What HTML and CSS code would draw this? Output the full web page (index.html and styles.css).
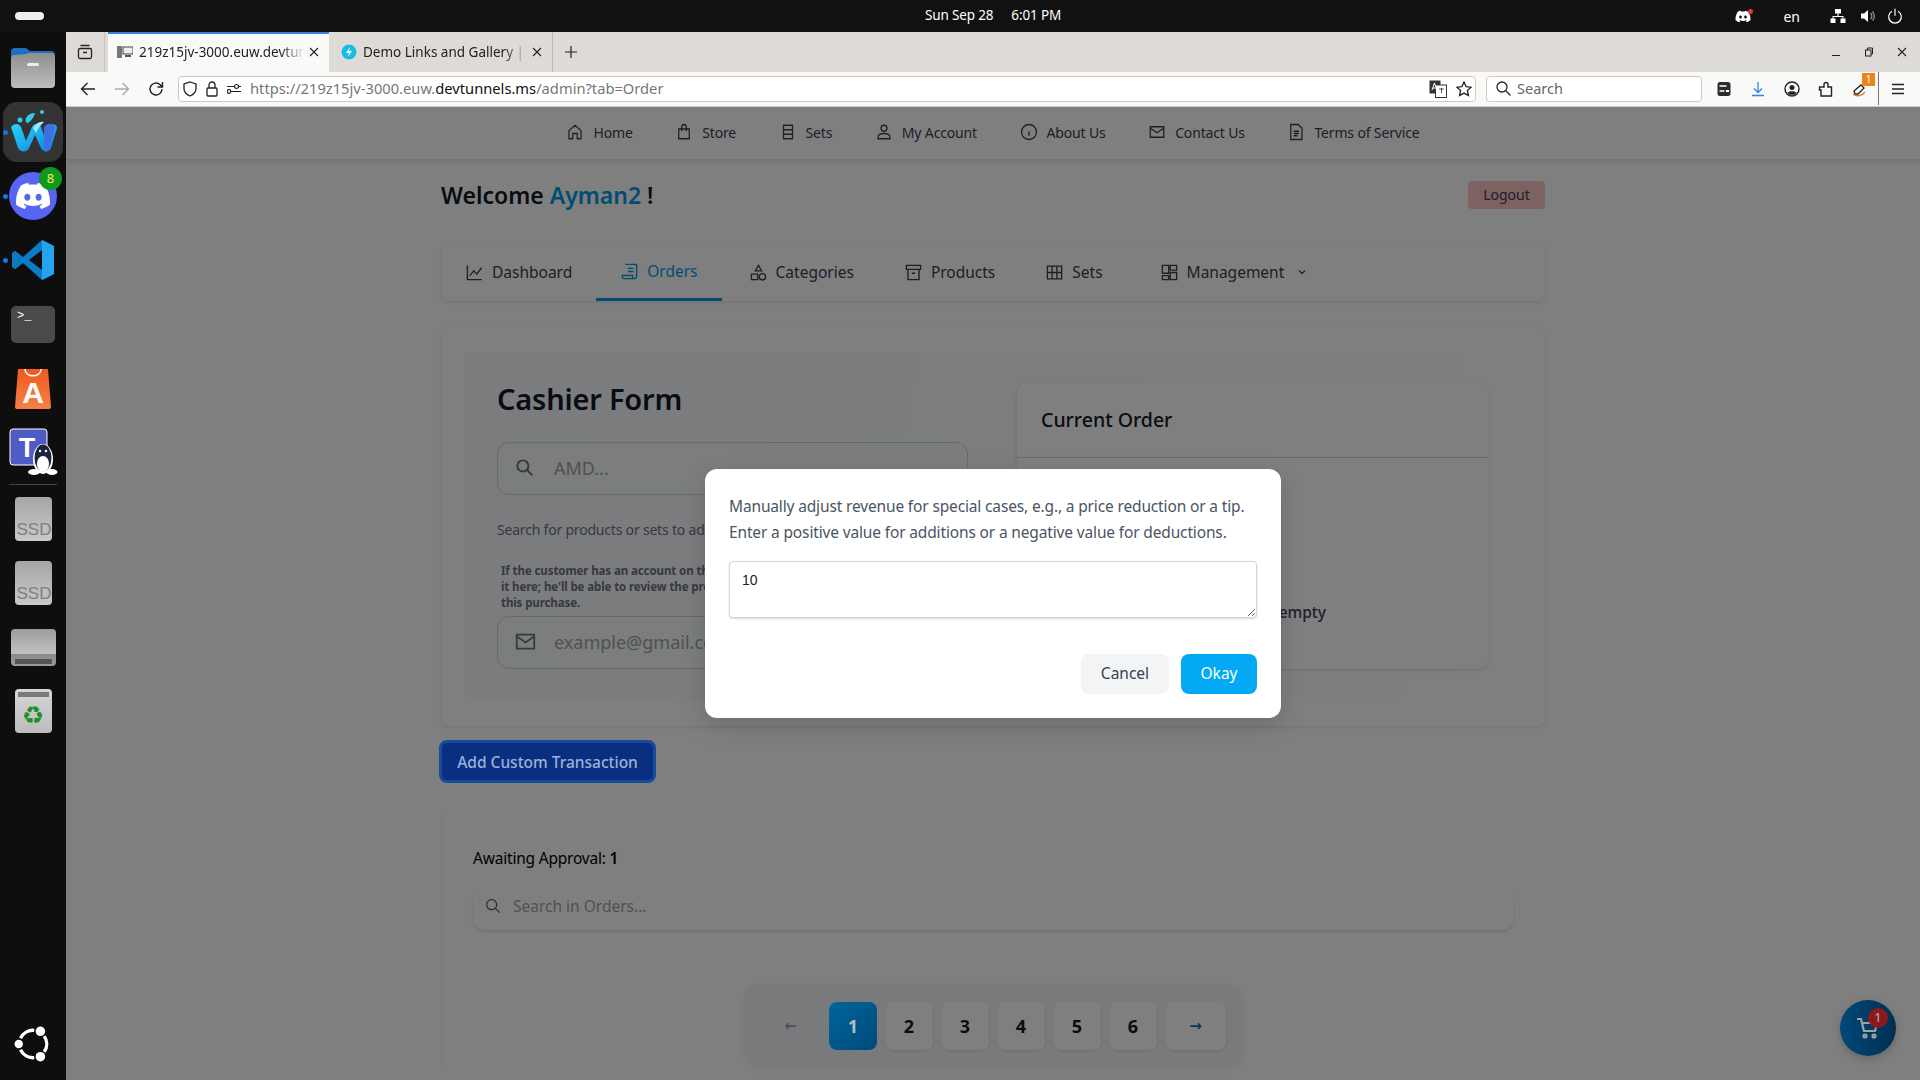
FILE: index.html
```html
<!doctype html>
<html lang="en">
	<head>
		<meta charset="utf-8">
		<title>Admin - Orders</title>
		<link rel="stylesheet" href="styles.css">
	</head>
	<body>
	<div class="topbar">
		<span class="pill"></span>
		<div class="clock"><span>Sun Sep 28</span><span>6:01 PM</span></div>
		<div class="tray">
			<span class="tray-discord">
				<svg width="20" height="15" viewBox="0 0 24 24" fill="#fff"><path d="M20.317 4.3698a19.7913 19.7913 0 00-4.8851-1.5152.0741.0741 0 00-.0785.0371c-.211.3753-.4447.8648-.6083 1.2495-1.8447-.2762-3.68-.2762-5.4868 0-.1636-.3933-.4058-.8742-.6177-1.2495a.077.077 0 00-.0785-.037 19.7363 19.7363 0 00-4.8852 1.515.0699.0699 0 00-.0321.0277C.5334 9.0458-.319 13.5799.0992 18.0578a.0824.0824 0 00.0312.0561c2.0528 1.5076 4.0413 2.4228 5.9929 3.0294a.0777.0777 0 00.0842-.0276c.4616-.6304.8731-1.2952 1.226-1.9942a.076.076 0 00-.0416-.1057c-.6528-.2476-1.2743-.5495-1.8722-.8923a.077.077 0 01-.0076-.1277c.1258-.0943.2517-.1923.3718-.2914a.0743.0743 0 01.0776-.0105c3.9278 1.7933 8.18 1.7933 12.0614 0a.0739.0739 0 01.0785.0095c.1202.099.246.1981.3728.2924a.077.077 0 01-.0066.1276 12.2986 12.2986 0 01-1.873.8914.0766.0766 0 00-.0407.1067c.3604.698.7719 1.3628 1.225 1.9932a.076.076 0 00.0842.0286c1.961-.6067 3.9495-1.5219 6.0023-3.0294a.077.077 0 00.0313-.0552c.5004-5.177-.8382-9.6739-3.5485-13.6604a.061.061 0 00-.0312-.0286zM8.02 15.3312c-1.1825 0-2.1569-1.0857-2.1569-2.419 0-1.3332.9555-2.4189 2.157-2.4189 1.2108 0 2.1757 1.0952 2.1568 2.419 0 1.3332-.9555 2.4189-2.1569 2.4189zm7.9748 0c-1.1825 0-2.1569-1.0857-2.1569-2.419 0-1.3332.9554-2.4189 2.1569-2.4189 1.2108 0 2.1757 1.0952 2.1568 2.419 0 1.3332-.946 2.4189-2.1568 2.4189Z"/></svg>
				<i class="tray-dot"></i>
			</span>
			<span class="tray-lang">en</span>
			<svg class="tray-net" width="16" height="16" viewBox="0 0 16 16" fill="#fff"><rect x="5" y="1" width="6" height="4.5"/><rect x="0.5" y="10.5" width="5" height="4.5"/><rect x="10.5" y="10.5" width="5" height="4.5"/><path d="M7.5 5h1v3h5v3h-1V9H3.5v2h-1V8h5z"/></svg>
			<svg class="tray-vol" width="16" height="16" viewBox="0 0 16 16" fill="#fff"><path d="M1 5.5h3L8 2v12l-4-3.500H1z"/><path d="M10.500 5a4 4 0 0 1 0 6M12.500 3.500a6.500 6.500 0 0 1 0 9" fill="none" stroke="#999" stroke-width="1.200"/></svg>
			<svg class="tray-power" width="16" height="16" viewBox="0 0 16 16" fill="none" stroke="#fff" stroke-width="1.200"><path d="M5 3.200a6.300 6.300 0 1 0 6 0M8 .8v7"/></svg>
		</div>
	</div>

	<div class="desktop">
		<div class="dock">
			<div class="dock-item">
				<svg width="46" height="42" viewBox="0 0 46 42"><path d="M1 5a4 4 0 0 1 4-4h11l4 3h21a4 4 0 0 1 4 4v12H1z" fill="#1c6fc4"/><path d="M1 12a4 4 0 0 1 4-4l11-1 3-1h22a4 4 0 0 1 4 4v27a4 4 0 0 1-4 4H5a4 4 0 0 1-4-4z" fill="url(#folder)"/><rect x="17" y="16" width="12" height="3" rx="1.500" fill="#eee"/><defs><linearGradient id="folder" x1="0" y1="0" x2="0" y2="1"><stop offset="0" stop-color="#8f8f8f"/><stop offset="1" stop-color="#bdbdbd"/></linearGradient></defs></svg>
			</div>
			<div class="dock-item dock-active">
				<i class="dock-dot"></i>
				<svg width="50" height="44" viewBox="0 0 50 44"><defs><linearGradient id="wave" x1="0" y1="0" x2="1" y2="1"><stop offset="0" stop-color="#2bd4f7"/><stop offset="1" stop-color="#0a7fe8"/></linearGradient></defs><path d="M3 17c3-4 8-4 10 0l5 14 6-14c2-4 7-4 9 0l5 14 5-15c1-3 6-2 6 2l-6 20c-1 4-8 5-10 0l-6-13-6 13c-2 5-9 4-11 0z" fill="url(#wave)"/><path d="M36 18c1-5 10-6 11 0l-6 20c-1 3-3 4-5 3z" fill="#3d6fe0"/><path d="M25 18c3-5 7-7 11-6-3 3-6 6-8 11z" fill="#9be9fb"/><path d="M18 8c2-4 6-5 9-5-1 4-3 7-7 10-2 0-3-2-2-5z" fill="#33c8ec"/><circle cx="12" cy="10" r="2.500" fill="#33c8ec"/><circle cx="34" cy="2" r="2" fill="#33c8ec"/></svg>
			</div>
			<div class="dock-item">
				<i class="dock-dot"></i>
				<span class="discord-tile">
					<svg width="34" height="34" viewBox="0 0 24 24" fill="#fff"><path d="M20.317 4.3698a19.7913 19.7913 0 00-4.8851-1.5152.0741.0741 0 00-.0785.0371c-.211.3753-.4447.8648-.6083 1.2495-1.8447-.2762-3.68-.2762-5.4868 0-.1636-.3933-.4058-.8742-.6177-1.2495a.077.077 0 00-.0785-.037 19.7363 19.7363 0 00-4.8852 1.515.0699.0699 0 00-.0321.0277C.5334 9.0458-.319 13.5799.0992 18.0578a.0824.0824 0 00.0312.0561c2.0528 1.5076 4.0413 2.4228 5.9929 3.0294a.0777.0777 0 00.0842-.0276c.4616-.6304.8731-1.2952 1.226-1.9942a.076.076 0 00-.0416-.1057c-.6528-.2476-1.2743-.5495-1.8722-.8923a.077.077 0 01-.0076-.1277c.1258-.0943.2517-.1923.3718-.2914a.0743.0743 0 01.0776-.0105c3.9278 1.7933 8.18 1.7933 12.0614 0a.0739.0739 0 01.0785.0095c.1202.099.246.1981.3728.2924a.077.077 0 01-.0066.1276 12.2986 12.2986 0 01-1.873.8914.0766.0766 0 00-.0407.1067c.3604.698.7719 1.3628 1.225 1.9932a.076.076 0 00.0842.0286c1.961-.6067 3.9495-1.5219 6.0023-3.0294a.077.077 0 00.0313-.0552c.5004-5.177-.8382-9.6739-3.5485-13.6604a.061.061 0 00-.0312-.0286zM8.02 15.3312c-1.1825 0-2.1569-1.0857-2.1569-2.419 0-1.3332.9555-2.4189 2.157-2.4189 1.2108 0 2.1757 1.0952 2.1568 2.419 0 1.3332-.9555 2.4189-2.1569 2.4189zm7.9748 0c-1.1825 0-2.1569-1.0857-2.1569-2.419 0-1.3332.9554-2.4189 2.1569-2.4189 1.2108 0 2.1757 1.0952 2.1568 2.419 0 1.3332-.946 2.4189-2.1568 2.4189Z"/></svg>
					<b class="discord-badge">8</b>
				</span>
			</div>
			<div class="dock-item">
				<i class="dock-dot"></i>
				<svg width="44" height="42" viewBox="0 0 44 42"><path d="M31 1l12 6v28l-12 6-19-17-8 6-3-2v-14l3-2 8 6z" fill="#0a7bc4"/><path d="M31 1l12 6v28l-12 6z" fill="#24a3ee"/><path d="M31 11L18 21l13 10z" fill="#0e0e0e"/><path d="M1 14l3-2 8 6 -4 3 4 3-8 6-3-2 6-7z" fill="#0e77ba"/></svg>
			</div>
			<div class="dock-item">
				<span class="term-tile">&gt;_</span>
			</div>
			<div class="dock-item">
				<svg width="38" height="44" viewBox="0 0 38 44"><defs><linearGradient id="bag" x1="0" y1="0" x2="0" y2="1"><stop offset="0" stop-color="#ee5a1e"/><stop offset="1" stop-color="#f58146"/></linearGradient></defs><path d="M4 3h30l3 38a2 2 0 0 1-2 2H3a2 2 0 0 1-2-2z" fill="url(#bag)"/><path d="M11 3c0 9 16 9 16 0" fill="none" stroke="#fff" stroke-width="1.500"/><text x="19" y="37" text-anchor="middle" font-family="Liberation Sans" font-size="30" font-weight="700" fill="#fff">A</text></svg>
			</div>
			<div class="dock-item">
				<svg width="50" height="48" viewBox="0 0 50 48"><rect x="2" y="1" width="37" height="36" rx="3" fill="#4e5cc4" stroke="#fff"/><text x="19" y="29" text-anchor="middle" font-family="Liberation Sans" font-size="27" font-weight="700" fill="#fff">T</text><ellipse cx="35" cy="31" rx="10" ry="15" fill="#fff"/><ellipse cx="35" cy="30" rx="8.500" ry="13.500" fill="#1b2340"/><ellipse cx="35" cy="36" rx="6" ry="8" fill="#fff"/><ellipse cx="26" cy="44" rx="6" ry="3" fill="#fff"/><ellipse cx="44" cy="44" rx="5.500" ry="3" fill="#fff"/><circle cx="32" cy="23" r="1.200" fill="#fff"/><circle cx="38" cy="23" r="1.200" fill="#fff"/></svg>
			</div>
			<div class="dock-sep"></div>
			<div class="dock-item">
				<span class="drive-tile">SSD</span>
			</div>
			<div class="dock-item">
				<span class="drive-tile">SSD</span>
			</div>
			<div class="dock-item">
				<span class="disk-tile"></span>
			</div>
			<div class="dock-item">
				<span class="trash-tile">♻</span>
			</div>
			<div class="dock-item dock-last">
				<svg width="38" height="38" viewBox="0 0 36 36" fill="none" stroke="#fff" stroke-width="3.200"><path d="M6.220 12.510A13 13 0 0 1 19.130 5.050M28.650 10.540A13 13 0 0 1 28.650 25.460M19.130 30.950A13 13 0 0 1 6.220 23.490"/><circle cx="4.500" cy="18" r="4" fill="#fff" stroke="none"/><circle cx="25" cy="6" r="4.500" fill="#fff" stroke="none"/><circle cx="25" cy="30" r="4.500" fill="#fff" stroke="none"/></svg>
			</div>
		</div>

		<div class="browser">
			<div class="tabstrip">
				<div class="tab-list">
					<svg width="16" height="16" viewBox="0 0 16 16" fill="none" stroke="#222" stroke-width="1.300"><rect x="1.500" y="4.500" width="13" height="10" rx="1.500"/><path d="M3.500 1.500h9M6 8.500h4"/></svg>
				</div>
				<div class="tab tab-on">
					<svg width="16" height="16" viewBox="0 0 16 16" fill="#555"><path d="M0 2h5v12H0z" fill="#777"/><rect x="6" y="3" width="10" height="7" fill="#eee" stroke="#444"/><path d="M8 11h6v2H8z"/></svg>
					<span class="tab-title">219z15jv-3000.euw.devtunnels.ms/admin?tab=Order</span>
					<svg class="tab-x" width="10" height="10" viewBox="0 0 10 10" stroke="#222" stroke-width="1.100"><path d="M1 1l8 8M9 1l-8 8"/></svg>
				</div>
				<div class="tab tab-two">
					<svg width="16" height="16" viewBox="0 0 16 16"><circle cx="8" cy="8" r="7.500" fill="#16bce2"/><path d="M9 3L5 9h3l-1 4 4-6H8z" fill="#fff"/></svg>
					<span class="tab-title">Demo Links and Gallery | Shadcn</span>
					<svg class="tab-x" width="10" height="10" viewBox="0 0 10 10" stroke="#222" stroke-width="1.100"><path d="M1 1l8 8M9 1l-8 8"/></svg>
				</div>
				<div class="tab-new">
					<svg width="12" height="12" viewBox="0 0 12 12" stroke="#222" stroke-width="1.200"><path d="M6 0v12M0 6h12"/></svg>
				</div>
				<div class="win-btns">
					<svg width="10" height="10" viewBox="0 0 10 10" stroke="#222"><path d="M1 8.500h8"/></svg>
					<svg width="10" height="10" viewBox="0 0 10 10" fill="none" stroke="#222"><rect x="1.500" y="3" width="5.500" height="6"/><path d="M3.500 3V1h5v6H7"/></svg>
					<svg width="10" height="10" viewBox="0 0 10 10" stroke="#222" stroke-width="1.100"><path d="M1 1l8 8M9 1l-8 8"/></svg>
				</div>
			</div>

			<div class="toolbar">
				<svg class="tool-back" width="16" height="16" viewBox="0 0 16 16" fill="none" stroke="#222" stroke-width="1.400"><path d="M15 8H1.500M7.500 2L1.500 8l6 6"/></svg>
				<svg class="tool-fwd" width="16" height="16" viewBox="0 0 16 16" fill="none" stroke="#aaa" stroke-width="1.400"><path d="M1 8h13.500M8.500 2l6 6-6 6"/></svg>
				<svg class="tool-reload" width="16" height="16" viewBox="0 0 16 16" fill="none" stroke="#222" stroke-width="1.400"><path d="M14 8a6 6 0 1 1-2-4.500L14 5.500M14.500 1v5h-5"/></svg>
				<div class="urlbar">
					<svg width="14" height="16" viewBox="0 0 14 16" fill="none" stroke="#222" stroke-width="1.300"><path d="M7 1l6 2v5c0 3-3 6-6 7-3-1-6-4-6-7V3z"/></svg>
					<svg width="12" height="16" viewBox="0 0 12 16" fill="none" stroke="#222" stroke-width="1.300"><rect x="1" y="7" width="10" height="8" rx="1"/><path d="M3 7V4a3 3 0 0 1 6 0v3"/></svg>
					<svg width="14" height="12" viewBox="0 0 14 12" fill="none" stroke="#222" stroke-width="1.200"><path d="M0 3.500h7M12 3.500h2M4 8.500h10"/><circle cx="9.500" cy="3.500" r="2"/><circle cx="2" cy="8.500" r="1.800"/></svg>
					<div class="url-text"><span>https://219z15jv-3000.euw.</span><b>devtunnels.ms</b><span>/admin?tab=Order</span></div>
					<svg width="18" height="18" viewBox="0 0 18 18"><rect x="0.500" y="0.500" width="11" height="13" fill="#333"/><rect x="6.500" y="5" width="11" height="12.500" fill="#fff" stroke="#333"/><path d="M3 10l2.500-7L8 10M4 8h3" stroke="#fff" fill="none"/><path d="M10 9h5M12.500 8v5" stroke="#555"/></svg>
					<svg width="16" height="16" viewBox="0 0 16 16" fill="none" stroke="#222" stroke-width="1.300"><path d="M8 1l2.100 4.600 5 .6-3.700 3.400 1 5L8 12.100l-4.400 2.500 1-5L.9 6.200l5-.6z"/></svg>
				</div>
				<div class="searchbar">
					<svg width="15" height="15" viewBox="0 0 15 15" fill="none" stroke="#222" stroke-width="1.300"><circle cx="6" cy="6" r="5"/><path d="M9.500 9.500L14.500 14.500"/></svg>
					<span>Search</span>
				</div>
				<div class="tool-icons">
					<svg width="16" height="16" viewBox="0 0 16 16"><rect x="1.500" y="1" width="13" height="14" rx="2.500" fill="#2c2c2c"/><path d="M3.500 5h7M3.500 10h5" stroke="#fff" stroke-width="1.500"/><rect x="10" y="9" width="3" height="2" fill="#fff"/></svg>
					<svg width="16" height="16" viewBox="0 0 16 16" fill="none" stroke="#3584e4" stroke-width="1.300"><path d="M8 1v10M4 7.500L8 11.500l4-4M2 14.500h12"/></svg>
					<svg width="16" height="16" viewBox="0 0 16 16"><circle cx="8" cy="8" r="7" fill="none" stroke="#222" stroke-width="1.400"/><circle cx="8" cy="6.500" r="2.500" fill="#222"/><path d="M3.500 12c1-2.500 8-2.500 9 0l-2 1.800H5.500z" fill="#222"/></svg>
					<svg width="16" height="16" viewBox="0 0 16 16" fill="none" stroke="#222" stroke-width="1.400"><path d="M3 15V9H1.500V6H6V3.500a2 2 0 0 1 4 0V6h3.500v9z"/></svg>
					<span class="ext-pen">
						<svg width="16" height="16" viewBox="0 0 16 16" fill="none" stroke="#222" stroke-width="1.300"><path d="M2 10l7-6 3 3-6 6H3z" fill="#fff"/><path d="M1 13c4 3 9 2 12-2" stroke="#d9772a"/></svg>
						<b class="ext-badge">1</b>
					</span>
					<i class="tool-sep"></i>
					<svg class="tool-menu" width="14" height="12" viewBox="0 0 14 12" stroke="#222" stroke-width="1.300"><path d="M1 1.500h12M1 6h12M1 10.500h12"/></svg>
				</div>
			</div>

			<div class="page">
				<div class="nav">
					<a class="nav-item">
						<svg viewBox="0 0 24 24"><path d="M4 21V10l8-7 8 7v11h-5v-7H9v7z"/></svg>Home</a>
					<a class="nav-item">
						<svg viewBox="0 0 24 24"><path d="M5 8h14v13H5zM9 11V5a3 3 0 0 1 6 0v6"/></svg>Store</a>
					<a class="nav-item">
						<svg viewBox="0 0 24 24"><path d="M6 3h12v18H6zM6 9h12M6 15h12M12 18h.01"/></svg>Sets</a>
					<a class="nav-item">
						<svg viewBox="0 0 24 24"><circle cx="12" cy="7" r="4"/><path d="M4 21v-2c0-3 3-5 8-5s8 2 8 5v2z"/></svg>My Account</a>
					<a class="nav-item">
						<svg viewBox="0 0 24 24"><circle cx="12" cy="12" r="10"/><path d="M12 11v6M12 7h.01"/></svg>About Us</a>
					<a class="nav-item">
						<svg viewBox="0 0 24 24"><path d="M3 5h18v14H3zM3 7l9 6 9-6"/></svg>Contact Us</a>
					<a class="nav-item">
						<svg viewBox="0 0 24 24"><path d="M5 2h10l5 5v15H5zM9 11h7M9 14h7M9 17h5"/></svg>Terms of Service</a>
				</div>

				<div class="container">
					<div class="welcome-row">
						<h2 class="welcome">Welcome <span class="name">Ayman2</span> !</h2>
						<button class="logout">Logout</button>
					</div>

					<div class="tabs">
						<a class="tab-link">
							<svg viewBox="0 0 24 24"><path d="M3 3v18h18M6 16l5-6 4 4 6-8"/></svg>Dashboard</a>
						<a class="tab-link tab-link-on">
							<svg viewBox="0 0 24 24"><path d="M7 3h14v15a3 3 0 0 1-3 3H5a2 2 0 0 1-2-2v-2h13v2a2 2 0 0 0 2 2M10 8h7M10 12h7"/></svg>Orders</a>
						<a class="tab-link tab-link-wide">
							<svg viewBox="0 0 24 24"><path d="M12 3l4 7H8zM3 14h8v7H3z"/><circle cx="17" cy="17.500" r="4"/></svg>Categories</a>
						<a class="tab-link tab-link-wide">
							<svg viewBox="0 0 24 24"><path d="M3 3h18v5H3zM5 8v13h14V8M10 13h4"/></svg>Products</a>
						<a class="tab-link tab-link-wide">
							<svg viewBox="0 0 24 24"><path d="M3 4h18v16H3zM3 12h18M9 4v16M15 4v16"/></svg>Sets</a>
						<a class="tab-link tab-link-wide tab-link-more">
							<svg viewBox="0 0 24 24"><path d="M3 3h8v10H3zM13 3h8v6h-8zM13 12h8v9h-8zM3 16h8v5H3z"/></svg>Management
							<svg class="chevron" viewBox="0 0 24 24"><path d="M6 9l6 6 6-6"/></svg></a>
					</div>

					<div class="card">
						<div class="panel">
							<div class="cashier">
								<h1 class="cashier-title">Cashier Form</h1>
								<div class="field">
									<svg viewBox="0 0 24 24" class="field-icon"><circle cx="10" cy="10" r="7"/><path d="M15 15l7 7"/></svg>
									<span class="field-hint">AMD...</span>
								</div>
								<p class="helper">Search for products or sets to add to the order</p>
								<p class="note">If the customer has an account on the store, enter<br>it here; he'll be able to review the products of<br>this purchase.</p>
								<div class="field field-mail">
									<svg viewBox="0 0 24 24" class="field-icon field-icon-mail"><path d="M2 4h20v16H2zM2 6l10 7 10-7"/></svg>
									<span class="field-hint">example@gmail.com</span>
								</div>
							</div>
							<div class="order">
								<div class="order-head">Current Order</div>
								<div class="order-body">
									<svg class="order-cart" viewBox="0 0 24 24"><path d="M1 2h4l3 13h11l3-9H6"/></svg>
									<span>Your order is empty</span>
								</div>
							</div>
						</div>
					</div>

					<button class="custom-btn">Add Custom Transaction</button>

					<div class="orders">
						<div class="awaiting">Awaiting Approval: <b>1</b></div>
						<div class="orders-search">
							<svg viewBox="0 0 24 24"><circle cx="10" cy="10" r="7.500"/><path d="M15.500 15.500L22 22"/></svg>
							<span>Search in Orders...</span>
						</div>
						<div class="pager">
							<a class="pg pg-arrow pg-off">←</a>
							<a class="pg pg-on">1</a>
							<a class="pg">2</a>
							<a class="pg">3</a>
							<a class="pg">4</a>
							<a class="pg">5</a>
							<a class="pg">6</a>
							<a class="pg pg-arrow pg-next">→</a>
						</div>
					</div>
				</div>

				<div class="fab">
					<svg viewBox="0 0 24 24"><path d="M1 3h4l3 12h11l2-8H6"/><circle cx="9" cy="20" r="1.500"/><circle cx="18" cy="20" r="1.500"/></svg>
					<b class="fab-badge">1</b>
				</div>

				<div class="overlay">
					<div class="modal">
						<p class="modal-text">Manually adjust revenue for special cases, e.g., a price reduction or a tip.<br>Enter a positive value for additions or a negative value for deductions.</p>
						<textarea class="modal-input">10</textarea>
						<div class="modal-btns">
							<button class="btn-cancel">Cancel</button>
							<button class="btn-okay">Okay</button>
						</div>
					</div>
				</div>
			</div>
		</div>
	</div>
	</body>
</html>
```

FILE: styles.css
```css
*{margin: 0;padding: 0;box-sizing: border-box;}
html,body{height: 100%;overflow: hidden;}
body{
	display: flex;
	flex-direction: column;
	font-family: "Noto Sans", "Open Sans", sans-serif;
	background: #111;
	color: #111827;
}
button{font-family: inherit;border: 0;}
svg{flex: none;display: block;}

/* ubuntu top bar */
.topbar{
	position: relative;
	flex: none;
	height: 32px;
	display: flex;
	align-items: center;
	justify-content: center;
	padding: 0 0 2px 66px;
	background: #111;
	color: #fff;
	font-size: 13.500px;
}
.pill{
	position: absolute;
	left: 15px;
	top: 12px;
	width: 29px;
	height: 8px;
	border-radius: 4px;
	background: #eee;
}
.clock{display: flex;gap: 18px;letter-spacing: -0.15px;}
.tray{
	position: absolute;
	right: 17px;
	top: 0;
	height: 32px;
	display: flex;
	align-items: center;
}
.tray-discord{position: relative;margin-right: 30px;}
.tray-dot{
	position: absolute;
	right: 0;
	top: 0;
	width: 5px;
	height: 5px;
	border-radius: 50%;
	background: #e33;
}
.tray-lang{font-size: 14px;margin-right: 30px;}
.tray-net{margin-right: 14px;}
.tray-vol{margin-right: 11px;}

/* dock */
.desktop{flex: 1;display: flex;min-height: 0;}
.dock{
	flex: none;
	width: 66px;
	display: flex;
	flex-direction: column;
	padding: 4px 0;
	background: #0e0e0e;
}
.dock-item{
	position: relative;
	flex: none;
	height: 64px;
	display: flex;
	align-items: center;
	justify-content: center;
}
.dock-active::before{
	content: "";
	position: absolute;
	left: 3px;
	top: 2px;
	width: 60px;
	height: 60px;
	border-radius: 14px;
	background: #333;
}
.dock-active svg{position: relative;}
.dock-last{margin-top: auto;}
.dock-dot{
	position: absolute;
	left: 3px;
	top: 30px;
	width: 5px;
	height: 5px;
	border-radius: 50%;
	background: #1473e6;
	z-index: 1;
}
.dock-sep{
	flex: none;
	height: 1px;
	margin: 0 9px 2px;
	background: #444;
}
.discord-tile{
	position: relative;
	width: 48px;
	height: 48px;
	border-radius: 50%;
	display: flex;
	align-items: center;
	justify-content: center;
	background: #5865f2;
}
.discord-badge{
	position: absolute;
	right: -5px;
	top: -5px;
	width: 23px;
	height: 23px;
	border-radius: 50%;
	background: #109a1c;
	color: #f4e96a;
	font-size: 13px;
	font-weight: 400;
	line-height: 23px;
	text-align: center;
}
.term-tile{
	width: 44px;
	height: 37px;
	padding: 2px 6px;
	border-radius: 5px;
	background: #4a4a4a;
	color: #fff;
	font-family: "Liberation Mono", monospace;
	font-size: 12px;
	line-height: 16px;
}
.drive-tile{
	width: 37px;
	height: 44px;
	border-radius: 4px;
	background: linear-gradient(#a5a5a5, #c9c9c9);
	color: #808080;
	font-family: "Liberation Sans", sans-serif;
	font-size: 17px;
	line-height: 65px;
	text-align: right;
	overflow: hidden;
}
.disk-tile{
	display: flex;
	align-items: flex-end;
	width: 45px;
	height: 37px;
	padding: 0 4px 2px;
	border-radius: 4px;
	background: linear-gradient(#9c9c9c, #c2c2c2 68%, #8a8a8a 68%, #9a9a9a);
}
.disk-tile::after{
	content: "";
	flex: 1;
	height: 5px;
	background: #555;
}
.trash-tile{
	position: relative;
	width: 37px;
	height: 44px;
	padding-top: 13px;
	border-radius: 4px;
	background: linear-gradient(#d6d6d6, #bcbcbc);
	color: #1f8f2c;
	font-family: "DejaVu Sans", sans-serif;
	font-size: 25px;
	line-height: 28px;
	text-align: center;
}
.trash-tile::before{
	content: "";
	position: absolute;
	left: 3px;
	right: 3px;
	top: 3px;
	height: 5px;
	background: #7b7b7b;
}

/* browser chrome */
.browser{flex: 1;min-width: 0;display: flex;flex-direction: column;}
.tabstrip{
	flex: none;
	height: 40px;
	display: flex;
	align-items: stretch;
	background: #dedbd6;
	color: #222;
	font-size: 13.500px;
}
.tab-list{
	width: 39px;
	display: flex;
	align-items: center;
	justify-content: center;
	border-right: 1px solid #c8c4be;
	margin-right: 3px;
}
.tab{
	width: 224px;
	display: flex;
	align-items: center;
	padding: 0 10px 0 9px;
	border-right: 1px solid #bdb9b3;
}
.tab-two{padding-left: 12px;}
.tab-on{
	width: 221px;
	background: #f9f9f7;
	border-top: 2px solid #3584e4;
	border-right: 0;
	padding-bottom: 2px;
}
.tab-title{
	flex: 1;
	min-width: 0;
	margin: 0 4px 0 6px;
	white-space: nowrap;
	overflow: hidden;
	-webkit-mask-image: linear-gradient(90deg, #000 85%, transparent);
	mask-image: linear-gradient(90deg, #000 85%, transparent);
}
.tab-new{
	width: 36px;
	display: flex;
	align-items: center;
	justify-content: center;
}
.win-btns{
	margin-left: auto;
	padding-right: 13px;
	display: flex;
	align-items: center;
	gap: 23px;
}
.toolbar{
	flex: none;
	height: 35px;
	display: flex;
	align-items: center;
	padding: 0 0 1px 14px;
	background: #f9f9f8;
	border-bottom: 1px solid #ccc9c4;
	color: #222;
}
.tool-fwd{margin-left: 18px;}
.tool-reload{margin-left: 18px;margin-right: 14px;}
.urlbar{
	width: 1298px;
	height: 26px;
	display: flex;
	align-items: center;
	gap: 9px;
	padding: 0 3px 0 4px;
	background: #fff;
	border: 1px solid #cfc9c2;
	border-radius: 4px;
	font-size: 14.700px;
}
.url-text{flex: 1;min-width: 0;padding-bottom: 2px;color: #777;white-space: nowrap;}
.url-text b{font-weight: 400;color: #111;}
.searchbar{
	width: 216px;
	height: 26px;
	margin-left: 10px;
	display: flex;
	align-items: center;
	gap: 6px;
	padding-left: 9px;
	background: #fff;
	border: 1px solid #cfc9c2;
	border-radius: 4px;
	font-size: 14.500px;
	color: #666;
}
.searchbar span{padding-bottom: 2px;}
.tool-icons{
	display: flex;
	align-items: center;
	gap: 18px;
	margin-left: 14px;
}
.ext-pen{position: relative;}
.ext-badge{
	position: absolute;
	right: -7px;
	top: -8px;
	width: 13px;
	height: 13px;
	background: #e9851d;
	color: #fff;
	font-size: 10px;
	font-weight: 400;
	line-height: 13px;
	text-align: center;
}
.tool-sep{flex: none;width: 1px;height: 33px;margin: 0 -6px 0 -8px;background: #777;}

/* page under the modal */
.page{position: relative;flex: 1;min-height: 0;overflow: hidden;background: #fff;}
.nav{
	height: 52px;
	display: flex;
	align-items: center;
	justify-content: center;
	gap: 42.500px;
	padding-bottom: 2px;
	background: #fff;
	box-shadow: 0 2px 6px rgba(0,0,0,.15);
	font-size: 14px;
	color: #374151;
}
.nav-item{display: flex;align-items: center;gap: 9px;letter-spacing: -0.15px;}
.nav-item svg{
	width: 18px;
	height: 18px;
	fill: none;
	stroke: currentColor;
	stroke-width: 1.700;
}
.tab-link svg{
	width: 19px;
	height: 19px;
	fill: none;
	stroke: currentColor;
	stroke-width: 1.700;
}
.container{width: 1104px;margin: 0 auto;}
.welcome-row{
	display: flex;
	align-items: center;
	justify-content: space-between;
	margin-top: 22px;
	height: 28px;
}
.welcome{font-size: 23px;font-weight: 600;}
.name{color: #039be5;}
.logout{
	width: 77px;
	height: 28px;
	padding-bottom: 2px;
	border-radius: 4px;
	background: #fcc2c2;
	color: #374151;
	font-size: 14px;
}
.tabs{
	display: flex;
	align-items: stretch;
	height: 56px;
	margin-top: 36px;
	background: #fff;
	border-radius: 8px;
	box-shadow: 0 1px 4px rgba(0,0,0,.12);
	font-size: 15.500px;
	color: #374151;
}
.tab-link{
	display: flex;
	align-items: center;
	gap: 8px;
	padding: 0 24px 2px;
}
.tab-link-on{
	margin-right: 1px;
	color: #039be5;
	border-bottom: 3px solid #039be5;
	padding-bottom: 1px;
}
.tab-link-wide{padding-left: 26px;}
.tab-link-more{margin-left: 7px;}
.tab-link .chevron{width: 12px;height: 12px;margin-left: 4px;stroke-width: 2.500;}
.card{
	margin-top: 27px;
	padding: 24px 24px 24px;
	background: #fff;
	border-radius: 8px;
	box-shadow: 0 1px 4px rgba(0,0,0,.12);
}
.panel{
	display: flex;
	justify-content: space-between;
	padding: 31px 32px 33px;
	background: linear-gradient(100deg, #f7f9fc, #f9fafc 50%, #fff);
}
.cashier{width: 471px;}
.cashier-title{font-size: 29px;font-weight: 600;line-height: 32px;letter-spacing: -0.2px;}
.field{
	height: 53px;
	margin-top: 27px;
	display: flex;
	align-items: center;
	gap: 20px;
	padding: 0 0 2px 17px;
	background: #f9fafb;
	border: 1px solid #cbd5e1;
	border-radius: 12px;
	font-size: 18px;
	color: #9ca3af;
}
.field-icon{
	width: 19px;
	height: 19px;
	fill: none;
	stroke: #6b7280;
	stroke-width: 2.500;
}
.field-icon-mail{stroke-width: 2;width: 21px;height: 21px;}
.field-mail{margin-top: 5px;gap: 18px;}
.helper{
	margin-top: 25px;
	font-size: 14px;
	line-height: 20px;
	color: #6b7280;
	white-space: nowrap;
	letter-spacing: -0.2px;
}
.note{
	margin-top: 23px;
	padding-left: 4px;
	font-size: 11.500px;
	font-weight: 700;
	line-height: 16px;
	color: #6b7280;
	white-space: nowrap;
	letter-spacing: -0.1px;
}
.order{
	width: 472px;
	height: 286px;
	background: #fff;
	border-radius: 12px;
	box-shadow: 0 1px 4px rgba(0,0,0,.12);
}
.order-head{
	height: 75px;
	padding: 24px;
	border-bottom: 1px solid #d1d5db;
	font-size: 19.500px;
	font-weight: 500;
	line-height: 26px;
}
.order-body{
	display: flex;
	flex-direction: column;
	align-items: center;
	padding-top: 46px;
	font-size: 15.500px;
	font-weight: 500;
	color: #374151;
	gap: 39px;
}
.order-cart{
	width: 58px;
	height: 58px;
	fill: none;
	stroke: #bbb;
	stroke-width: 1;
}
.custom-btn{
	display: block;
	position: relative;
	z-index: 6;
	width: 217px;
	height: 43px;
	margin: 14px 0 0 -2px;
	background: #0a2e80;
	border: 3px solid #1a4a9a;
	border-radius: 8px;
	color: #9db2d6;
	font-size: 15.500px;
	font-weight: 500;
}
.orders{
	margin-top: 32px;
	padding: 31px 31px 0 31px;
	border-left: 1px solid #f2f2f2;
}
.awaiting{font-size: 15.500px;line-height: 24px;letter-spacing: -0.2px;color: #000;}
.awaiting b{font-weight: 600;}
.orders-search{
	height: 43px;
	margin-top: 17px;
	display: flex;
	align-items: center;
	gap: 12px;
	padding: 0 0 6px 12px;
	background: #fff;
	border-radius: 12px;
	box-shadow: 0 2px 3px rgba(0,0,0,.12);
	font-size: 15.500px;
	color: #a3a3a3;
}
.orders-search svg{
	width: 16px;
	height: 18px;
	fill: none;
	stroke: #555;
	stroke-width: 1.800;
}
.pager{
	width: 497px;
	height: 81px;
	margin: 55px 0 0 272px;
	display: flex;
	align-items: flex-start;
	gap: 8px;
	padding: 17px 15px;
	background: #f3f5f8;
	border-radius: 12px;
	box-shadow: 0 2px 10px rgba(0,0,0,.06);
}
.pg{
	flex: none;
	width: 48px;
	height: 48px;
	display: flex;
	align-items: center;
	justify-content: center;
	border-radius: 8px;
	background: #fff;
	box-shadow: 0 1px 3px rgba(0,0,0,.12);
	font-size: 18px;
	font-weight: 700;
	color: #111827;
}
.pg-arrow{width: 61px;font-family: "DejaVu Sans", sans-serif;font-size: 15px;}
.pg-off{background: #f3f5f8;box-shadow: none;color: #9ca3af;}
.pg-next{color: #0277bd;}
.pg-on{
	position: relative;
	z-index: 6;
	background: linear-gradient(135deg, #00659c, #004a78);
	box-shadow: none;
	color: #b0bec8;
}
.fab{
	position: absolute;
	right: 24px;
	bottom: 24px;
	z-index: 6;
	width: 56px;
	height: 56px;
	display: flex;
	align-items: center;
	justify-content: center;
	border-radius: 50%;
	background: linear-gradient(90deg, #00497a, #002f50);
	box-shadow: 0 3px 8px rgba(0,0,0,.2);
}
.fab svg{
	width: 24px;
	height: 24px;
	fill: none;
	stroke: #a0a0a0;
	stroke-width: 2.200;
}
.fab-badge{
	position: absolute;
	right: 8px;
	top: 8px;
	width: 20px;
	height: 20px;
	border-radius: 50%;
	background: #8b1a1f;
	color: #bbb;
	font-size: 12px;
	font-weight: 400;
	line-height: 20px;
	text-align: center;
}

/* dialog */
.overlay{
	position: absolute;
	inset: 0;
	z-index: 5;
	display: flex;
	align-items: center;
	justify-content: center;
	background: rgba(0,0,0,.5);
}
.modal{
	width: 576px;
	height: 249px;
	padding: 24px;
	background: #fff;
	border-radius: 12px;
	box-shadow: 0 8px 24px rgba(0,0,0,.15);
}
.modal-text{
	font-size: 15.500px;
	line-height: 26px;
	color: #4b5563;
	white-space: nowrap;
	letter-spacing: -0.15px;
}
.modal-input{
	display: block;
	width: 100%;
	height: 57px;
	margin-top: 16px;
	padding: 10px 12px;
	border: 1px solid #d1d5db;
	border-radius: 4px;
	box-shadow: 0 1px 2px rgba(0,0,0,.15);
	font-family: "Liberation Sans", Arial, sans-serif;
	font-size: 14px;
	color: #222;
	outline: none;
}
.modal-btns{
	display: flex;
	justify-content: flex-end;
	gap: 12px;
	margin-top: 36px;
}
.modal-btns button{height: 40px;padding-bottom: 2px;border-radius: 8px;font-size: 15.500px;}
.btn-cancel{width: 88px;background: #f3f4f6;color: #374151;}
.btn-okay{width: 76px;background: #03a9f4;color: #fff;}
```
